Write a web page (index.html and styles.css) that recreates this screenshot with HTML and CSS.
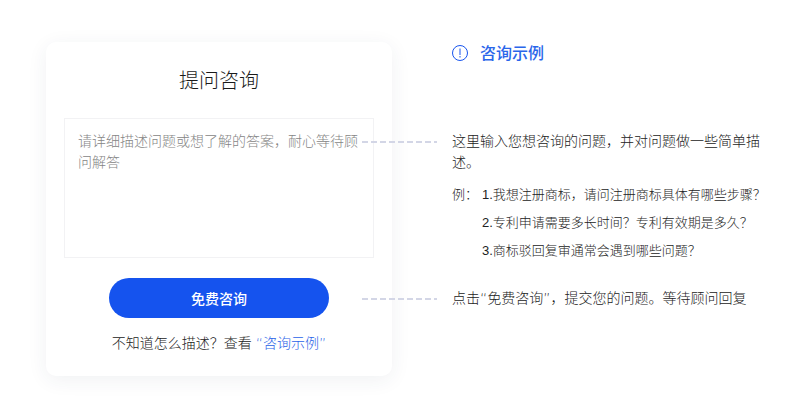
FILE: index.html
```html
<!DOCTYPE html>
<html lang="zh-CN">
<head>
<meta charset="utf-8">
<title>提问咨询</title>
<link rel="stylesheet" href="styles.css">
</head>
<body>
<main class="page">
  <section class="card">
    <h1 class="card-title">提问咨询</h1>
    <div class="textarea">请详细描述问题或想了解的答案&#xFF0C;耐心等待顾问解答</div>
    <button class="submit" type="button">免费咨询</button>
    <p class="hint">不知道怎么描述&#xFF1F;查看 <a class="hint-link"><span class="quote">“</span>咨询示例<span class="quote">”</span></a></p>
  </section>
  <aside class="notes">
    <div class="notes-head">
      <svg class="info" width="16" height="16" viewBox="0 0 16 16" aria-hidden="true">
        <circle cx="8" cy="8" r="7.5" fill="none" stroke="#1855ee" stroke-width="1"/>
        <rect x="7.5" y="3.5" width="1" height="6.5" fill="#1855ee"/>
        <rect x="7.5" y="11" width="1" height="1.5" fill="#1855ee"/>
      </svg>
      <h2 class="notes-title">咨询示例</h2>
    </div>
    <p class="note-main">这里输入您想咨询的问题&#xFF0C;并对问题做一些简单描述。</p>
    <div class="examples">
      <span class="examples-label">例&#xFF1A;</span>
      <ol class="examples-list">
        <li>1.我想注册商标&#xFF0C;请问注册商标具体有哪些步骤&#xFF1F;</li>
        <li>2.专利申请需要多长时间&#xFF1F;专利有效期是多久&#xFF1F;</li>
        <li>3.商标驳回复审通常会遇到哪些问题&#xFF1F;</li>
      </ol>
    </div>
    <p class="note-last">点击<span class="quote">“</span>免费咨询<span class="quote">”</span>&#xFF0C;提交您的问题。等待顾问回复</p>
  </aside>
  <span class="connector connector-top"></span>
  <span class="connector connector-bottom"></span>
</main>
</body>
</html>
```
FILE: styles.css
```css
* { box-sizing: border-box; }
html, body { margin: 0; padding: 0; background: #fff; }
body {
  width: 800px;
  height: 420px;
  overflow: hidden;
  font-family: "Liberation Sans", "Noto Sans CJK SC", sans-serif;
  font-weight: 300;
  color: #222;
}
.page {
  position: relative;
  display: flex;
  align-items: flex-start;
  width: 800px;
  height: 420px;
  padding: 42px 0 0 46px;
}
.card {
  width: 346px;
  height: 334px;
  background: #fff;
  border-radius: 10px;
  box-shadow: 0 4px 20px rgba(40, 50, 80, 0.07);
  padding: 24px 18px 0 18px;
  display: flex;
  flex-direction: column;
  align-items: center;
}
.card-title {
  margin: 0;
  font-size: 20px;
  line-height: 30px;
  font-weight: 300;
  color: #1a1a1a;
}
.textarea {
  width: 310px;
  height: 140px;
  margin-top: 22px;
  padding: 12px 13px;
  border: 1px solid #f2f2f4;
  font-size: 14px;
  line-height: 21px;
  color: #858585;
}
.submit {
  width: 220px;
  height: 40px;
  margin-top: 20px;
  border: 0;
  border-radius: 20px;
  background: #1553ee;
  color: #fff;
  font: 500 14px/38px "Noto Sans CJK SC", sans-serif;
  padding: 0;
}
.hint {
  margin: 14px 0 0;
  font-size: 14px;
  line-height: 22px;
  color: #222;
}
.hint-link { color: #2a62e8; }
.quote { font-family: "DejaVu Sans", sans-serif; }
.notes {
  width: 310px;
  margin-left: 60px;
}
.notes-head {
  display: flex;
  align-items: flex-start;
  gap: 12px;
  height: 24px;
}
.info { margin-top: 3px; }
.notes-title {
  margin: 0;
  font-size: 16px;
  line-height: 24px;
  font-weight: 500;
  color: #2a66ea;
}
.note-main {
  margin: 65px 0 0;
  font-size: 14px;
  line-height: 21px;
  color: #222;
}
.examples {
  display: flex;
  margin-top: 8px;
  font-size: 13px;
  line-height: 28px;
  color: #222;
}
.examples-label { width: 30px; flex: none; }
.examples-list { margin: 0; padding: 0; list-style: none; white-space: nowrap; }
.note-last {
  margin: 23px 0 0;
  font-size: 14px;
  line-height: 21px;
  color: #222;
}
.connector {
  position: absolute;
  left: 362px;
  width: 75px;
  height: 2px;
  background: repeating-linear-gradient(90deg, #d3d6e6 0 6px, transparent 6px 9px);
}
.connector-top { top: 141px; }
.connector-bottom { top: 298px; }
```
